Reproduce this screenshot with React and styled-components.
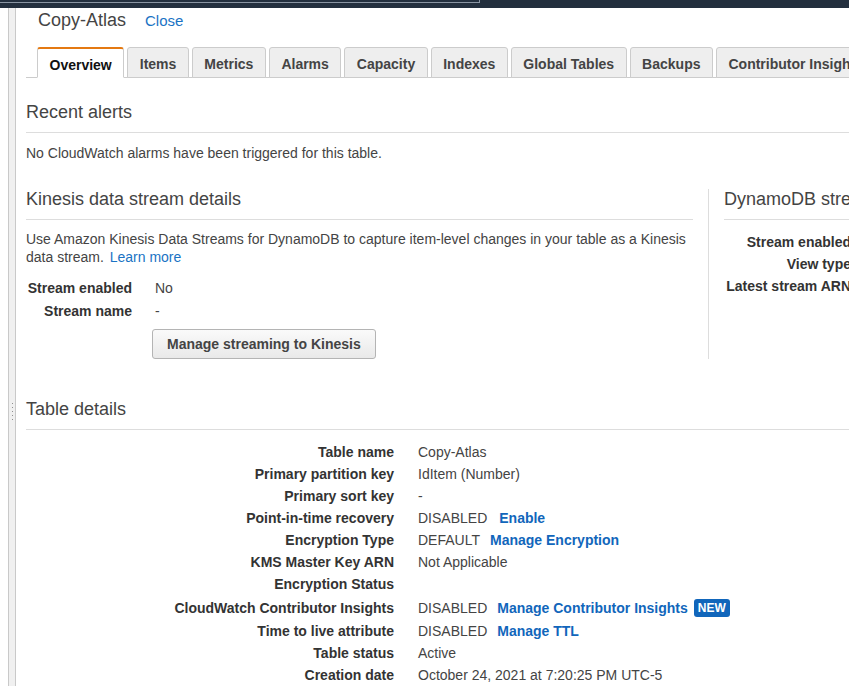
import React from "react";
import styled, { createGlobalStyle } from "styled-components";

const Global = createGlobalStyle`
  html, body { margin: 0; padding: 0; background: #fff; overflow: hidden; }
  body { font-family: "Liberation Sans", Arial, sans-serif; font-size: 14px; color: #444; }
  * { box-sizing: border-box; }
`;

const TopBar = styled.div`
  height: 8px;
  background: #232f3e;
`;
const SearchEdge = styled.div`
  width: 480px;
  height: 3px;
  border-right: 1px solid #8a95a3;
  border-bottom: 1px solid #8a95a3;
`;

const Layout = styled.div`
  display: flex;
  min-height: calc(100vh - 8px);
`;

const Splitter = styled.div`
  flex: none;
  width: 8px;
  margin-left: 8px;
  background: #f0f0f0;
  border-left: 1px solid #c9c9c9;
  border-right: 1px solid #c9c9c9;
  display: flex;
  flex-direction: column;
  align-items: center;
  gap: 3px;
  padding-top: 395px;
`;
const GripDot = styled.span`
  width: 1px;
  height: 1px;
  background: #8f8f8f;
`;

const Main = styled.div`
  flex: none;
  width: 1400px;
  padding-left: 10px;
`;

const TitleRow = styled.div`
  display: flex;
  align-items: baseline;
  height: 24px;
  padding-left: 12px;
`;
const Title = styled.span`
  font-size: 18px;
  line-height: 24px;
  color: #444;
`;
const Link = styled.a`
  color: ${(p) => (p.$strong ? "#1166bb" : "#1a73c4")};
  font-weight: ${(p) => (p.$strong ? 700 : 400)};
  font-size: ${(p) => p.$size || "14px"};
  text-decoration: none;
  cursor: pointer;
  margin-left: ${(p) => p.$ml || "0"};
`;

const TabBar = styled.div`
  display: flex;
  gap: 3px;
  margin-top: 15px;
  padding-left: 11px;
  height: 31px;
  border-bottom: 1px solid #cccccc;
`;
const Tab = styled.div`
  height: 31px;
  padding: 0 11.5px;
  display: flex;
  align-items: center;
  padding-top: ${(p) => (p.$active ? "3px" : "2px")};
  font-weight: 700;
  font-size: 14px;
  white-space: nowrap;
  color: ${(p) => (p.$active ? "#111" : "#444")};
  background: ${(p) => (p.$active ? "#fff" : "#eeeeee")};
  border: 1px solid #cccccc;
  border-top: ${(p) => (p.$active ? "2px solid #e47911" : "1px solid #cccccc")};
  border-bottom: 1px solid ${(p) => (p.$active ? "#fff" : "#cccccc")};
  border-radius: 3px 3px 0 0;
`;

const Section = styled.section`
  margin-top: ${(p) => p.$mt || "0"};
`;
const Heading = styled.h2`
  margin: 0;
  font-size: 18px;
  font-weight: 400;
  line-height: 18px;
  color: #444;
  padding-top: 1px;
  padding-bottom: 11px;
  border-bottom: 1px solid #dddddd;
  white-space: nowrap;
`;
const Text = styled.p`
  margin: ${(p) => p.$mt || "10px"} 0 0;
  line-height: ${(p) => p.$lh || "20px"};
  color: #444;
`;

const Columns = styled.div`
  display: grid;
  grid-template-columns: 682px 682px;
  margin-top: 26px;
`;
const LeftCol = styled.div`
  padding-right: 15px;
`;
const RightCol = styled.div`
  border-left: 1px solid #dddddd;
  padding-left: 15px;
`;

const KV = styled.div`
  display: grid;
  grid-template-columns: ${(p) => p.$label} auto;
  column-gap: ${(p) => p.$gap || "23px"};
  row-gap: ${(p) => p.$rowGap || "0"};
  margin-top: ${(p) => p.$mt || "0"};
  line-height: ${(p) => p.$lh || "22px"};
  align-items: center;
`;
const Label = styled.div`
  text-align: right;
  font-weight: 700;
  color: #333;
  white-space: nowrap;
  min-height: ${(p) => p.$h || "auto"};
  display: flex;
  align-items: center;
  justify-content: flex-end;
`;
const Value = styled.div`
  color: #444;
  white-space: nowrap;
  min-height: ${(p) => p.$h || "auto"};
  display: flex;
  align-items: center;
  gap: ${(p) => p.$gap || "12px"};
`;

const Button = styled.button`
  margin-top: 5px;
  margin-left: -3px;
  justify-self: start;
  height: 30px;
  padding: 0 14px;
  font-family: inherit;
  font-size: 14px;
  font-weight: 700;
  color: #444;
  background: linear-gradient(#fafafa, #e9e9e9);
  border: 1px solid #b4b4b4;
  border-radius: 3px;
  cursor: pointer;
`;

const Badge = styled.span`
  display: inline-flex;
  align-items: center;
  height: 18px;
  padding: 0 4px;
  background: #1166bb;
  color: #fff;
  font-weight: 700;
  font-size: 12px;
  border-radius: 3px;
  margin-left: -4px;
`;

const tabs = [
  "Overview",
  "Items",
  "Metrics",
  "Alarms",
  "Capacity",
  "Indexes",
  "Global Tables",
  "Backups",
  "Contributor Insights",
  "Triggers",
];

const details = [
  ["Table name", "Copy-Atlas"],
  ["Primary partition key", "IdItem (Number)"],
  ["Primary sort key", "-"],
  ["Point-in-time recovery", "DISABLED", "Enable"],
  ["Encryption Type", "DEFAULT", "Manage Encryption"],
  ["KMS Master Key ARN", "Not Applicable"],
  ["Encryption Status", ""],
  ["CloudWatch Contributor Insights", "DISABLED", "Manage Contributor Insights", true],
  ["Time to live attribute", "DISABLED", "Manage TTL"],
  ["Table status", "Active"],
  ["Creation date", "October 24, 2021 at 7:20:25 PM UTC-5"],
];

export default function App() {
  return (
    <>
      <Global />
      <TopBar>
        <SearchEdge />
      </TopBar>
      <Layout>
        <Splitter>
          {[0, 1, 2, 3, 4].map((i) => (
            <GripDot key={i} />
          ))}
        </Splitter>
        <Main>
          <TitleRow>
            <Title>Copy-Atlas</Title>
            <Link $size="15px" $ml="19px">Close</Link>
          </TitleRow>
          <TabBar>
            {tabs.map((t, i) => (
              <Tab key={t} $active={i === 0}>
                {t}
              </Tab>
            ))}
          </TabBar>

          <Section $mt="24px">
            <Heading>Recent alerts</Heading>
            <Text>No CloudWatch alarms have been triggered for this table.</Text>
          </Section>

          <Columns>
            <LeftCol>
              <Heading>Kinesis data stream details</Heading>
              <Text $mt="10px" $lh="18px">
                Use Amazon Kinesis Data Streams for DynamoDB to capture item-level changes in your table as a Kinesis data stream.{" "}
                <Link $ml="2px">Learn more</Link>
              </Text>
              <KV $label="106px" $gap="23px" $rowGap="3px" $lh="20px" $mt="12px">
                <Label>Stream enabled</Label>
                <Value>No</Value>
                <Label>Stream name</Label>
                <Value>-</Value>
                <span />
                <Button>Manage streaming to Kinesis</Button>
              </KV>
            </LeftCol>
            <RightCol>
              <Heading>DynamoDB stream details</Heading>
              <KV $label="127px" $gap="24px" $mt="11px">
                <Label>Stream enabled</Label>
                <Value>No</Value>
                <Label>View type</Label>
                <Value>-</Value>
                <Label>Latest stream ARN</Label>
                <Value>-</Value>
              </KV>
            </RightCol>
          </Columns>

          <Section $mt="40px">
            <Heading>Table details</Heading>
            <KV $label="368px" $gap="24px" $mt="11px">
              {details.map(([k, v, link, isNew]) => (
                <React.Fragment key={k}>
                  <Label $h={isNew ? "25px" : "22px"}>{k}</Label>
                  <Value $h={isNew ? "25px" : "22px"} $gap={k.startsWith("Point") ? "12px" : "10px"}>
                    {v && <span>{v}</span>}
                    {link && <Link $strong>{link}</Link>}
                    {isNew && <Badge>NEW</Badge>}
                  </Value>
                </React.Fragment>
              ))}
            </KV>
          </Section>
        </Main>
      </Layout>
    </>
  );
}
